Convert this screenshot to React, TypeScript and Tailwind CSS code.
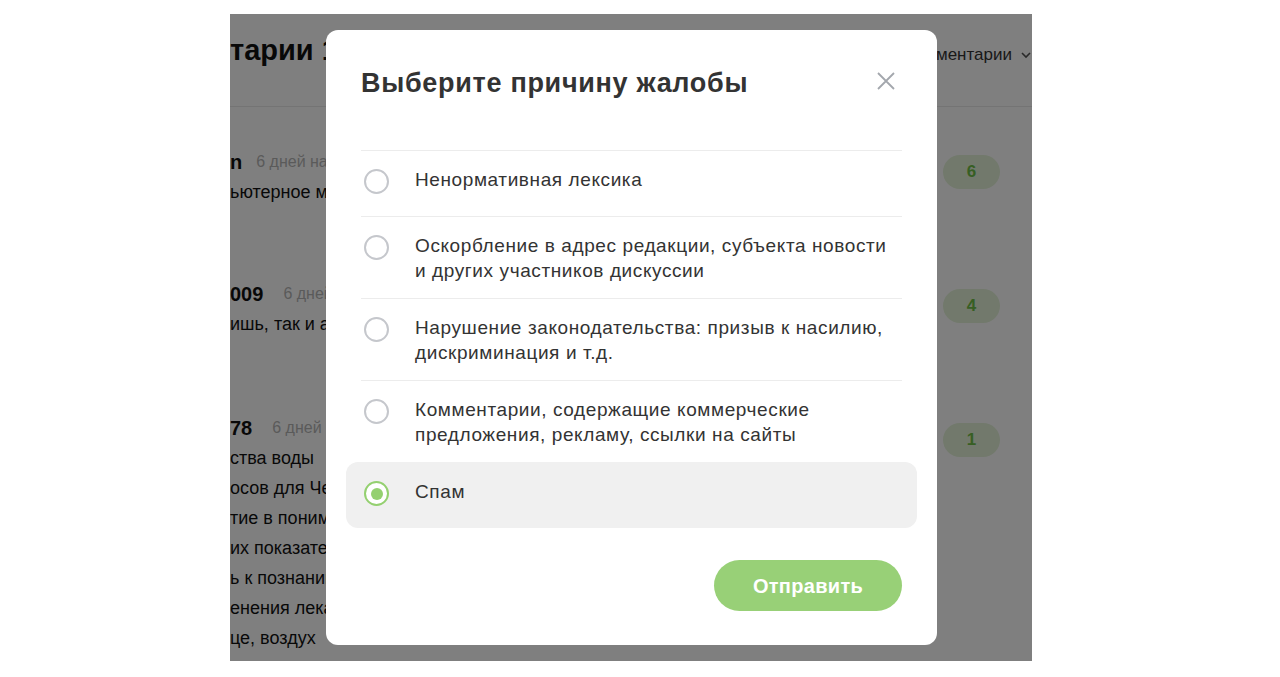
import { useState } from 'react';

const reasons = [
  'Ненормативная лексика',
  'Оскорбление в адрес редакции, субъекта новости\nи других участников дискуссии',
  'Нарушение законодательства: призыв к насилию,\nдискриминация и т.д.',
  'Комментарии, содержащие коммерческие\nпредложения, рекламу, ссылки на сайты',
  'Спам',
];

function Radio({ checked }: { checked: boolean }) {
  return (
    <span
      className={`mt-[2px] ml-[3px] flex h-[25px] w-[25px] shrink-0 items-center justify-center rounded-full border-2 bg-white ${
        checked ? 'border-[#94d070]' : 'border-[#c5c7cc]'
      }`}
    >
      {checked && <span className="h-[12px] w-[12px] rounded-full bg-[#94d070]" />}
    </span>
  );
}

function Badge({ n }: { n: number }) {
  return (
    <div className="flex h-[34px] w-[57px] items-center justify-center rounded-full bg-[#e4f3d8] text-[17px] font-bold text-[#6fbe47]">
      {n}
    </div>
  );
}

export default function App() {
  const [selected, setSelected] = useState(4);

  return (
    <div
      className="h-[677px] w-[1280px] bg-white pt-[14px] pl-[230px]"
      style={{ fontFamily: '"Liberation Sans", Arial, sans-serif' }}
    >
      <div className="relative h-[647px] w-[802px] overflow-hidden bg-white text-[#111]">
        {/* page under the dialog */}
        <div className="flex h-[93px] items-start justify-between border-b border-[#e8e8e8] pt-[18px]">
          <h2 className="whitespace-nowrap text-[29px] font-bold leading-[36px]">тарии 11</h2>
          <div className="mt-[10px] flex items-center gap-[8px] whitespace-nowrap text-[17px] leading-[26px] text-[#333]">
            Все комментарии
            <svg width="12" height="12" viewBox="0 0 12 12" fill="none" stroke="#555" strokeWidth="1.6">
              <path d="M2 4l4 4 4-4" />
            </svg>
          </div>
        </div>

        <div className="pt-[40px] pr-[32px]">
          <div className="mb-[72px] flex justify-between">
            <div className="whitespace-nowrap">
              <div className="flex items-center gap-[14px] leading-[30px]">
                <span className="text-[20px] font-bold">n</span>
                <span className="text-[16px] text-[#b5b5b5]">6 дней назад</span>
              </div>
              <div className="text-[18px] leading-[30px]">ьютерное моделирование</div>
            </div>
            <div className="mt-[8px]">
              <Badge n={6} />
            </div>
          </div>

          <div className="mb-[74px] flex justify-between">
            <div className="whitespace-nowrap">
              <div className="flex items-center gap-[20px] leading-[30px]">
                <span className="text-[20px] font-bold">009</span>
                <span className="text-[16px] text-[#b5b5b5]">6 дней назад</span>
              </div>
              <div className="text-[18px] leading-[30px]">ишь, так и аукнется</div>
            </div>
            <div className="mt-[10px]">
              <Badge n={4} />
            </div>
          </div>

          <div className="flex justify-between">
            <div className="whitespace-nowrap text-[18px] leading-[30px]">
              <div className="flex items-center gap-[20px]">
                <span className="text-[20px] font-bold">78</span>
                <span className="text-[16px] text-[#b5b5b5]">6 дней назад</span>
              </div>
              <div>ства воды</div>
              <div>осов для Человека</div>
              <div>тие в понимании</div>
              <div>их показателей</div>
              <div>ь к познанию</div>
              <div>енения лекарств</div>
              <div>це, воздух</div>
            </div>
            <div className="mt-[10px]">
              <Badge n={1} />
            </div>
          </div>
        </div>

        {/* dim */}
        <div className="absolute inset-0 bg-black/50" />

        {/* dialog */}
        <div className="absolute top-[16px] left-[96px] flex h-[615px] w-[611px] flex-col rounded-xl bg-white px-[35px] pt-[36px]">
          <div className="mb-[50px] flex items-center justify-between">
            <h1 className="text-[27px] font-bold leading-[34px] tracking-[0.7px] text-[#333]">Выберите причину жалобы</h1>
            <svg className="mr-[7px] mb-[4px]" width="18" height="18" viewBox="0 0 18 18" fill="none" stroke="#a3a7ad" strokeWidth="1.8">
              <path d="M1 1l16 16M17 1L1 17" />
            </svg>
          </div>

          <div className="flex flex-col">
            {reasons.map((r, i) => {
              const on = i === selected;
              return (
                <div
                  key={i}
                  onClick={() => setSelected(i)}
                  className={`flex min-h-[66px] cursor-pointer items-start pt-[16px] pb-[15px] ${
                    on
                      ? '-mx-[15px] rounded-xl border-t border-transparent bg-[#f0f0f0] px-[15px]'
                      : 'border-t border-[#ececec]'
                  }`}
                >
                  <Radio checked={on} />
                  <span className="ml-[26px] whitespace-pre-line text-[19px] leading-[25px] tracking-[0.6px] text-[#333]">
                    {r}
                  </span>
                </div>
              );
            })}
          </div>

          <button className="mt-[32px] h-[51px] w-[188px] self-end rounded-full bg-[#98d077] text-[20px] font-bold tracking-[0.3px] text-white">
            Отправить
          </button>
        </div>
      </div>
    </div>
  );
}
